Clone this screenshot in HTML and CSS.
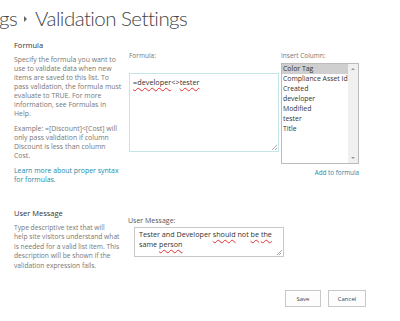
FILE: index.html
```html
<!DOCTYPE html>
<html>
<head>
<meta charset="utf-8">
<link rel="stylesheet" href="styles.css">
</head>
<body>
<div class="page">
  <h1 class="title"><span class="crumb">gs</span><span class="sep"></span><span>Validation Settings</span></h1>

  <div class="section formula-section">
    <div class="desc">
      <h2 class="heading">Formula</h2>
      <p>Specify the formula you want to<br>use to validate data when new<br>items are saved to this list. To<br>pass validation, the formula must<br>evaluate to TRUE. For more<br>information, see Formulas in<br>Help.</p>
      <p>Example: =[Discount]&lt;[Cost] will<br>only pass validation if column<br>Discount is less than column<br>Cost.</p>
      <p><a class="link" href="#">Learn more about proper syntax<br>for formulas.</a></p>
    </div>
    <div class="field formula-field">
      <div class="formula-box">
        <label class="label">Formula:</label>
        <div class="textarea tall"><span class="sq">=developer</span>&lt;&gt;<span class="sq">tester</span><span class="grip"></span></div>
      </div>
      <div class="insert">
        <label class="label">Insert Column:</label>
        <div class="listbox">
          <ul class="options">
            <li class="selected">Color Tag</li>
            <li>Compliance Asset Id</li>
            <li>Created</li>
            <li>developer</li>
            <li>Modified</li>
            <li>tester</li>
            <li>Title</li>
          </ul>
          <div class="scrollbar"><span class="arrow up"></span><span class="arrow down"></span></div>
        </div>
        <a class="link add" href="#">Add to formula</a>
      </div>
    </div>
  </div>

  <div class="section message-section">
    <div class="desc">
      <h2 class="heading">User Message</h2>
      <p class="msg-desc">Type descriptive text that will<br>help site visitors understand what<br>is needed for a valid list item. This<br>description will be shown if the<br>validation expression fails.</p>
    </div>
    <div class="field message-field">
      <label class="label">User Message:</label>
      <div class="textarea short">Tester and Developer <span class="sq">should</span> not <span class="sq">be</span> <span class="sq">the</span> same <span class="sq">person</span><span class="grip"></span></div>
    </div>
  </div>

  <div class="buttons">
    <button class="btn save">Save</button>
    <button class="btn cancel">Cancel</button>
  </div>
</div>
</body>
</html>
```
FILE: styles.css
```css
* { box-sizing: border-box; }
html, body { margin: 0; padding: 0; background: #fff; }
body {
  font-family: "Open Sans", "Noto Sans", sans-serif;
  color: #444;
  width: 400px;
  height: 321px;
  overflow: hidden;
}
.page { display: flex; flex-direction: column; }
.title {
  margin: 0 0 0 -1px;
  height: 38px;
  padding-bottom: 3px;
  font-family: Lato, "Open Sans", sans-serif;
  font-weight: 300;
  font-size: 20.5px;
  letter-spacing: -0.55px;
  line-height: 36px;
  color: #444;
  display: flex;
  align-items: center;
  white-space: nowrap;
}
.sep {
  display: inline-block;
  width: 0; height: 0;
  border-top: 3px solid transparent;
  border-bottom: 3px solid transparent;
  border-left: 3px solid #666;
  margin: 3px 8px 0 7px;
}
.section {
  display: grid;
  grid-template-columns: 114px 1fr;
  padding-left: 14px;
}
.formula-section { height: 168px; }
.message-section { height: 84px; }
.heading {
  margin: 2px 0 5px 0;
  font-size: 7.5px;
  font-weight: 400;
  color: #333;
  line-height: 10px;
}
.desc { width: 114px; }
.desc p {
  margin: 0 0 6px 0;
  font-size: 6.9px;
  line-height: 9px;
  color: #777;
  white-space: nowrap;
}
.desc .msg-desc { line-height: 9.4px; font-size: 6.7px; }
.link { color: #1e8aa5; text-decoration: none; }
.formula-field { display: flex; gap: 2px; padding-top: 13px; }
.label { display: block; font-size: 6.5px; color: #777; line-height: 9px; }
.formula-box { width: 150px; margin-left: 1px; }
.textarea {
  position: relative;
  border: 1px solid #c4e6ea;
  font-size: 7.3px;
  line-height: 10px;
  color: #333;
  padding: 3px 4px;
}
.tall { height: 79px; margin-top: 13px; padding-left: 3px; }
.short {
  height: 30px; width: 150px; margin-left: 6px;
  border-color: #c8c8c8;
  font-size: 7.2px;
  padding: 1px 4px;
}
.sq {
  text-decoration: underline wavy #e03030;
  text-decoration-thickness: 1px;
  text-underline-offset: 2px;
}
.grip {
  position: absolute;
  right: 1px; bottom: 1px;
  width: 5px; height: 5px;
  background: linear-gradient(135deg, transparent 45%, #aaa 45%, #aaa 55%, transparent 55%, transparent 70%, #aaa 70%, #aaa 80%, transparent 80%);
}
.insert { width: 78px; display: flex; flex-direction: column; }
.listbox {
  margin-top: 3px;
  width: 78px;
  height: 101px;
  border: 1px solid #bbb;
  display: flex;
}
.options {
  list-style: none;
  margin: 0; padding: 0;
  flex: 1;
  font-size: 6.9px;
  line-height: 10px;
  color: #333;
  white-space: nowrap;
  overflow: hidden;
}
.options li { padding-left: 1px; }
.options .selected { background: #cfcfcf; }
.scrollbar {
  width: 10px;
  background: #f0f0f0;
  display: flex;
  flex-direction: column;
  justify-content: space-between;
  align-items: center;
  padding: 4px 0;
}
.arrow { width: 0; height: 0; border-left: 2px solid transparent; border-right: 2px solid transparent; }
.arrow.up { border-bottom: 2px solid #999; }
.arrow.down { border-top: 2px solid #999; }
.add { align-self: flex-end; font-size: 6.3px; margin-top: 4px; }
.message-field { padding-top: 10px; }
.message-field .label { font-size: 7px; color: #555; margin-bottom: 2px; }
.buttons {
  display: flex;
  justify-content: flex-end;
  gap: 7px;
  padding-right: 34px;
}
.btn {
  font-family: inherit;
  font-size: 6px;
  color: #444;
  background: #fdfdfd;
  border: 1px solid #c8c8c8;
  height: 17px;
  padding: 0;
}
.save { width: 36px; }
.cancel { width: 38px; }
```
